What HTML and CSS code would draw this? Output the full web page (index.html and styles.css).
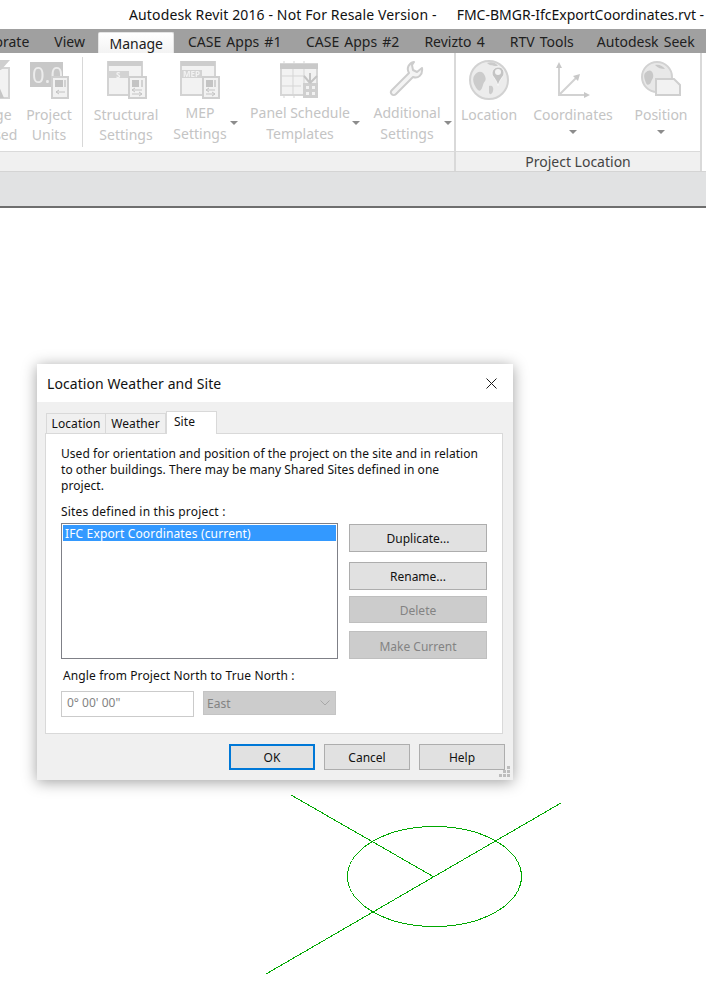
FILE: index.html
```html
<!DOCTYPE html>
<html lang="en">
<head>
<meta charset="utf-8">
<title>Location Weather and Site</title>
<link rel="stylesheet" href="styles.css">
</head>
<body>
<header class="titlebar">
  <span class="title-app">Autodesk Revit 2016 - Not For Resale Version -</span>
  <span>FMC-BMGR-IfcExportCoordinates.rvt -</span>
</header>
<nav class="tabs">
  <span class="tab tab-first">Collaborate</span>
  <span class="tab">View</span>
  <span class="tab tab-active">Manage</span>
  <span class="tab tab-case-one">CASE Apps #1</span>
  <span class="tab">CASE Apps #2</span>
  <span class="tab">Revizto 4</span>
  <span class="tab">RTV Tools</span>
  <span class="tab tab-last">Autodesk Seek</span>
</nav>
<section class="ribbon">
  <div class="panel panel-settings">
    <div class="tools">
      <div class="tool tool-purge">
        <svg class="icon" width="48" height="48" viewBox="0 0 48 48"><path d="M15 12h26v30H15z" fill="#f2f2f2" stroke="#d4d4d4" stroke-width="2"/><path d="M12 4h30l-9 10H21z" fill="#cfcfcf"/><path d="M25 14h5v14l6 14H19l6-14z" fill="#c6c6c6"/></svg>
        <span class="label">Purge<br>Unused</span>
      </div>
      <div class="tool tool-units">
        <svg class="icon" width="48" height="48" viewBox="0 0 48 48"><rect x="5" y="6" width="33" height="25" fill="#c8c8c8"/><text x="7" y="27" class="icon-text">0.0</text><rect x="27" y="21" width="16" height="21" fill="#f1f1f1" stroke="#cfcfcf" stroke-width="2"/><rect x="30" y="24" width="8" height="7" fill="#c2c2c2"/><rect x="39" y="24" width="2" height="7" fill="#d2d2d2"/><path d="M31 36h9M31 36l3-2M31 36l3 2" stroke="#c2c2c2" fill="none"/></svg>
        <span class="label">Project<br>Units</span>
      </div>
      <div class="sep"></div>
      <div class="tool tool-structural">
        <svg class="icon" width="48" height="48" viewBox="0 0 48 48"><rect x="6" y="6" width="34" height="33" fill="#f2f2f2" stroke="#d3d3d3" stroke-width="2"/><rect x="6" y="5" width="34" height="5" fill="#cdcdcd"/><rect x="7" y="15" width="20" height="7" fill="#d3d3d3"/><text x="14" y="22" class="icon-small">S</text><rect x="27" y="21" width="17" height="21" fill="#f2f2f2" stroke="#cfcfcf" stroke-width="2"/><rect x="30" y="24" width="7" height="7" fill="#c4c4c4"/><rect x="39" y="24" width="2" height="7" fill="#d2d2d2"/><path d="M30 34h10M30 34l3-2M30 34l3 2M30 38h10M40 38l-3-2M40 38l-3 2" stroke="#c4c4c4" fill="none"/></svg>
        <span class="label">Structural<br>Settings</span>
      </div>
      <div class="tool tool-mep">
        <svg class="icon" width="48" height="48" viewBox="0 0 48 48"><rect x="5" y="6" width="34" height="33" fill="#f2f2f2" stroke="#d3d3d3" stroke-width="2"/><rect x="5" y="5" width="34" height="5" fill="#cdcdcd"/><rect x="6" y="14" width="20" height="8" fill="#d3d3d3"/><text x="7" y="21" class="icon-small">MEP</text><rect x="27" y="21" width="16" height="21" fill="#f2f2f2" stroke="#cfcfcf" stroke-width="2"/><rect x="30" y="24" width="7" height="7" fill="#c4c4c4"/><rect x="38" y="24" width="2" height="7" fill="#d2d2d2"/><path d="M30 34h9M30 34l3-2M30 34l3 2M30 38h9M39 38l-3-2M39 38l-3 2" stroke="#c4c4c4" fill="none"/></svg>
        <span class="label label-high">MEP<br>Settings</span>
        <i class="caret caret-side caret-mep"></i>
      </div>
      <div class="tool tool-panel">
        <svg class="icon" width="48" height="48" viewBox="0 0 48 48"><rect x="5" y="8" width="36" height="31" fill="#f2f2f2" stroke="#d6d6d6" stroke-width="2"/><rect x="4" y="8" width="38" height="5" fill="#c9c9c9"/><path d="M8 5v3M18 5v3M28 5v3M8 39v3M18 39v3M17 13v26M28 13v15M5 20h24M5 30h20" stroke="#d5d5d5" fill="none"/><rect x="27" y="27" width="15" height="15" fill="#cfcfcf"/><path d="M30 30h3v3h-3zM36 30h3v3h-3zM30 36h3v3h-3zM36 36h3v3h-3z" fill="#f2f2f2"/><path d="M34 27V17M34 27l-6-7M34 27l7-7" stroke="#c4c4c4" stroke-width="2" fill="none"/></svg>
        <span class="label label-high">Panel Schedule<br>Templates</span>
        <i class="caret caret-side caret-panel"></i>
      </div>
      <div class="tool tool-additional">
        <svg class="icon" width="48" height="48" viewBox="0 0 48 48"><path d="M31 6c-5 1-8 6-5 11L9 34c-3 3 1 7 4 4l17-17c5 2 10-2 9-9l-5 4-4-2-1-5z" fill="#f4f4f4" stroke="#cdcdcd" stroke-width="2" stroke-linejoin="round"/></svg>
        <span class="label label-high">Additional<br>Settings</span>
        <i class="caret caret-side caret-additional"></i>
      </div>
    </div>
    <div class="panel-foot"></div>
  </div>
  <div class="panel panel-location">
    <div class="tools">
      <div class="tool tool-location">
        <svg class="icon" width="48" height="48" viewBox="0 0 48 48"><circle cx="24" cy="24" r="19" fill="#ececec" stroke="#d2d2d2" stroke-width="2"/><path d="M9 20c4-6 9-5 11 0s-1 5-2 9-3 8-6 4-5-9-3-13zM22 7c5-2 9 0 11 3-4 0-8 0-11-3zM24 30c3-1 5 1 4 5s-4 4-4 1z" fill="#cbcbcb"/><path d="M33 11c4 0 6 3 6 6 0 4-4 5-6 13-2-8-6-9-6-13 0-3 3-6 6-6z" fill="#c4c4c4" stroke="#f6f6f6"/><circle cx="33" cy="16" r="3" fill="#f3f3f3"/></svg>
        <span class="label">Location</span>
      </div>
      <div class="tool tool-coordinates">
        <svg class="icon" width="48" height="48" viewBox="0 0 48 48"><path d="M10 9v30h28M10 39l18-18" fill="none" stroke="#d2d2d2" stroke-width="2"/><path d="M10 6l-3 6h6zM41 39l-6-3v6zM31 18l-7 2 5 5z" fill="#c8c8c8"/></svg>
        <span class="label">Coordinates</span>
        <i class="caret"></i>
      </div>
      <div class="tool tool-position">
        <svg class="icon" width="48" height="48" viewBox="0 0 48 48"><circle cx="20" cy="21" r="15" fill="#e8e8e8" stroke="#d2d2d2" stroke-width="2"/><path d="M8 17c4-4 7-3 8 1s-1 5-2 8-4 4-5 1-3-7-1-10zM18 9c4-1 8 1 10 4-4 0-7-1-10-4z" fill="#c8c8c8"/><path d="M19 23h18l6 6v10H19z" fill="#f2f2f2" stroke="#cfcfcf" stroke-width="2"/></svg>
        <span class="label">Position</span>
        <i class="caret"></i>
      </div>
    </div>
    <div class="panel-foot">Project Location</div>
  </div>
  <div class="panel panel-rest"></div>
</section>
<div class="optionsbar"></div>
<main class="canvas">
  <svg class="drawing" width="706" height="793" viewBox="0 208 706 793">
    <ellipse cx="434.500" cy="876.500" rx="87" ry="50" fill="none" stroke="#00a800"/>
    <path d="M291 795L434 877M561 803L266 974" fill="none" stroke="#00a800"/>
  </svg>
  <div class="dialog">
    <div class="dialog-title">
      <span class="dialog-name">Location Weather and Site</span>
      <svg class="close" width="11" height="11" viewBox="0 0 11 11"><path d="M.5.5l10 10M10.500.5l-10 10" stroke="#1a1a1a" fill="none"/></svg>
    </div>
    <div class="dialog-body">
      <div class="dtabs">
        <span class="dtab dtab-location">Location</span>
        <span class="dtab dtab-weather">Weather</span>
        <span class="dtab dtab-on">Site</span>
      </div>
      <div class="sheet">
        <p class="intro">Used for orientation and position of the project on the site and in relation<br>to other buildings. There may be many Shared Sites defined in one<br>project.</p>
        <div class="sites-label">Sites defined in this project :</div>
        <div class="sites-row">
          <div class="listbox"><div class="listitem">IFC Export Coordinates (current)</div></div>
          <div class="side-btns">
            <button class="btn btn-dup">Duplicate...</button>
            <button class="btn btn-ren">Rename...</button>
            <button class="btn btn-off btn-del" disabled>Delete</button>
            <button class="btn btn-off btn-cur" disabled>Make Current</button>
          </div>
        </div>
        <div class="angle-label">Angle from Project North to True North :</div>
        <div class="angle-row">
          <div class="angle-input">0° 00' 00"</div>
          <div class="angle-select"><span>East</span>
            <svg width="10" height="6" viewBox="0 0 10 6"><path d="M.5.500L5 5l4.500-4.500" fill="none" stroke="#a8a8a8"/></svg>
          </div>
        </div>
      </div>
      <div class="actions">
        <button class="btn btn-act btn-ok">OK</button>
        <button class="btn btn-act">Cancel</button>
        <button class="btn btn-act">Help</button>
      </div>
      <svg class="grip" width="11" height="11" viewBox="0 0 11 11"><path d="M8 0h3v3H8zM4 4h3v3H4zM8 4h3v3H8zM0 8h3v3H0zM4 8h3v3H4zM8 8h3v3H8z" fill="#bdbdbd"/></svg>
    </div>
  </div>
</main>
</body>
</html>
```
FILE: styles.css
```css
* { box-sizing: border-box; }
html, body { margin: 0; height: 1001px; overflow: hidden; background: #fff; }
body { width: 706px; font-family: "Noto Sans", sans-serif; font-size: 14px; color: #1a1a1a; display: flex; flex-direction: column; }

.titlebar { height: 29px; flex: none; display: flex; gap: 20px; padding: 5px 0 0 129px; line-height: 20px; white-space: nowrap; overflow: hidden; color: #111; }
.title-app { letter-spacing: .13px; }

.tabs { height: 24px; flex: none; display: flex; background: #a0a0a0; white-space: nowrap; overflow: hidden; align-items: flex-end; word-spacing: 1.500px; }
.tab { flex: none; height: 24px; line-height: 25px; padding: 0 12.500px; color: #202020; }
.tab-first { margin-left: -59px; }
.tab-case-one { padding-right: 12px; }
.tab-last { margin-left: -2px; }
.tab-active { height: 21px; line-height: 22px; padding: 0 0 0 10px; width: 76px; margin: 0 1px; background: linear-gradient(#fff, #f3f3f3); border: 1px solid #e4e4e4; border-bottom: 0; border-radius: 2px 2px 0 0; }

.ribbon { height: 119px; flex: none; display: flex; background: #fff; border-bottom: 1px solid #d4d4d4; overflow: hidden; }
.panel { display: flex; flex-direction: column; flex: none; }
.panel-settings { width: 454px; }
.panel-location { width: 248px; border-left: 2px solid #d9d9d9; border-right: 2px solid #d9d9d9; }
.panel-rest { flex: 1; }
.tools { height: 98px; display: flex; }
.panel-foot { height: 20px; background: #f0f0f0; border-top: 1px solid #dadada; text-align: center; line-height: 20px; color: #444; }

.tool { position: relative; flex: none; display: flex; flex-direction: column; align-items: center; padding-top: 3px; color: #c4c4c4; text-align: center; white-space: nowrap; }
.icon { display: block; filter: blur(.35px); }
.label { display: block; line-height: 20px; margin-top: 1px; }
.label-high { margin-top: -2px; line-height: 21px; }
.sep { width: 1px; height: 90px; margin: 4px 6px 0 2px; background: #d8d8d8; flex: none; }
.icon-text { font: 22px "Noto Sans", sans-serif; fill: #ececec; }
.icon-small { font: bold 8px "Noto Sans", sans-serif; fill: #f2f2f2; }

.tool-purge { width: 52px; margin-left: -34px; }
.tool-units { width: 62px; }
.tool-structural { width: 74px; }
.tool-mep { width: 74px; }
.tool-panel { width: 126px; }
.tool-additional { width: 88px; }
.tool-location { width: 66px; }
.tool-coordinates { width: 102px; }
.tool-position { width: 74px; }

.caret { width: 0; height: 0; border: 4px solid transparent; border-top: 4px solid #8c8c8c; border-bottom: 0; display: block; margin-top: 5px; }
.caret-side { position: absolute; top: 68px; margin: 0; }
.caret-mep { right: -1px; }
.caret-panel { right: 3px; }
.caret-additional { right: -1px; }

.optionsbar { height: 36px; flex: none; background: #e1e2e3; border-bottom: 2px solid #6e6e6e; }

.canvas { position: relative; flex: 1; overflow: hidden; background: #fff; }
.drawing { position: absolute; left: 0; top: 0; shape-rendering: crispEdges; }

.dialog { position: absolute; left: 37px; top: 156px; width: 476px; height: 416px; background: #f0f0f0; display: flex; flex-direction: column; box-shadow: 0 2px 14px rgba(0,0,0,.38); font-size: 12px; color: #111; }
.dialog-title { height: 38px; flex: none; background: #fff; display: flex; justify-content: space-between; align-items: center; padding: 0 16px 0 10px; font-size: 14px; }
.dialog-name { letter-spacing: .08px; }
.dialog-body { position: relative; flex: 1; padding: 10px 10px 0 8px; display: flex; flex-direction: column; }

.dtabs { display: flex; height: 21px; padding-left: 1px; align-items: flex-end; flex: none; position: relative; z-index: 1; letter-spacing: .1px; }
.dtab { height: 20px; line-height: 20px; text-align: center; background: #f0f0f0; border: 1px solid #d9d9d9; border-bottom: 0; }
.dtab-location { width: 60px; }
.dtab-weather { width: 60px; border-left: 0; }
.dtab-on { width: 51px; height: 23px; line-height: 19px; background: #fff; margin-bottom: -1px; padding-right: 14px; }

.sheet { height: 301px; flex: none; background: #fff; border: 1px solid #d9d9d9; padding: 12px 15px 0; }
.intro { margin: 0; line-height: 16px; letter-spacing: .05px; }
.sites-label { margin-top: 10px; line-height: 16px; height: 16px; letter-spacing: .19px; }
.sites-row { margin-top: 3px; display: flex; gap: 11px; height: 136px; }
.listbox { width: 277px; height: 136px; flex: none; border: 1px solid #7f8087; padding: 1px; background: #fff; }
.listitem { height: 16px; line-height: 18px; padding-left: 2px; background: #3399ff; color: #fff; white-space: nowrap; letter-spacing: .15px; }
.side-btns { display: flex; flex-direction: column; width: 138px; padding-top: 1px; }
.btn { font: inherit; color: #111; background: #e1e1e1; border: 1px solid #adadad; padding: 0; height: 28px; width: 138px; }
.side-btns .btn { padding-top: 2px; }
.btn-ren { margin-top: 10px; }
.btn-off { background: #cccccc; border-color: #bfbfbf; color: #838383; }
.btn-del { margin-top: 6px; }
.btn-cur { margin-top: 8px; }

.angle-label { margin: 9px 0 0 2px; height: 16px; line-height: 16px; letter-spacing: .12px; }
.angle-row { display: flex; gap: 9px; margin-top: 7px; }
.angle-input { width: 133px; height: 26px; border: 1px solid #cbcbcb; line-height: 22px; padding-left: 5px; color: #838383; background: #fff; }
.angle-select { width: 133px; height: 24px; background: #cccccc; border: 1px solid #c4c4c4; display: flex; justify-content: space-between; align-items: center; padding: 0 5px 0 3px; color: #838383; }

.actions { display: flex; justify-content: flex-end; gap: 9px; margin-top: 10px; margin-right: -2px; }
.btn-act { width: 86px; height: 26px; }
.btn-ok { border: 2px solid #0078d7; }
.grip { position: absolute; right: 3px; bottom: 3px; }
```
